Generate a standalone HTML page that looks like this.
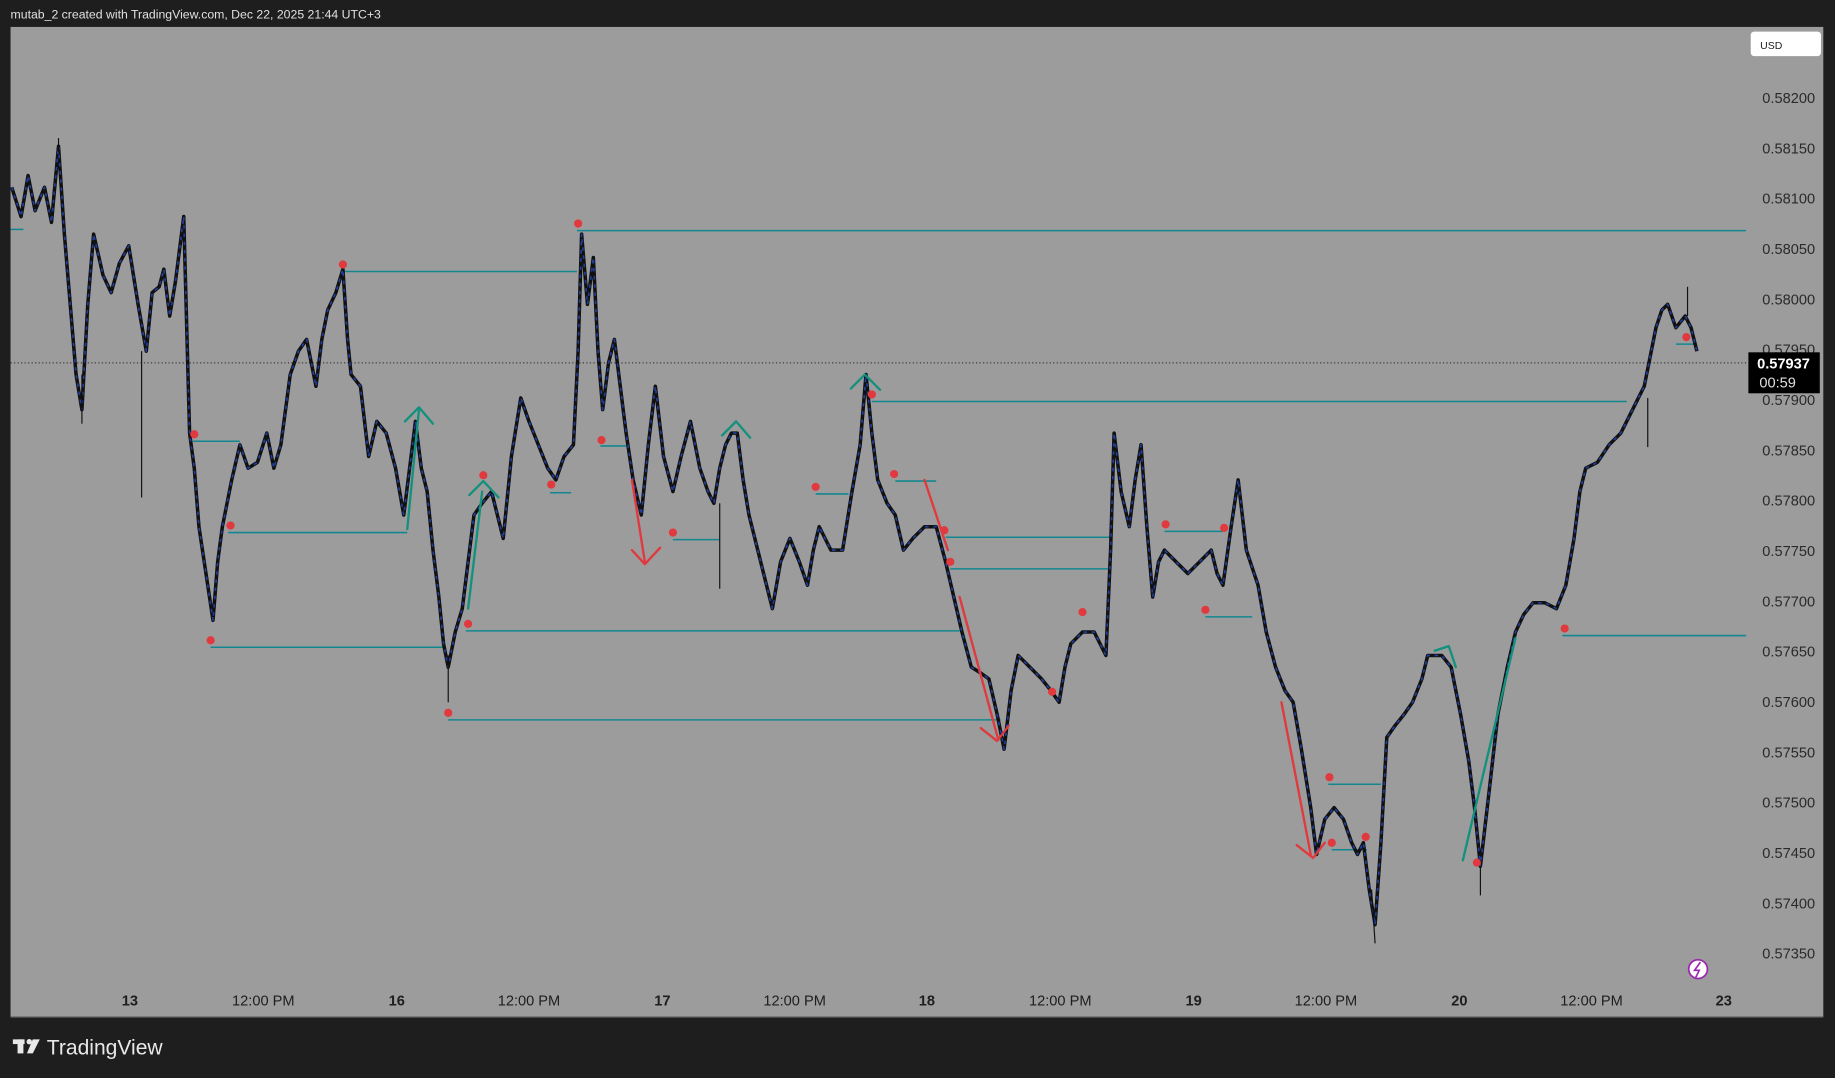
<!DOCTYPE html>
<html><head><meta charset="utf-8"><style>
html,body{margin:0;padding:0;background:#1e1e1e;overflow:hidden}
svg{display:block}
text{font-family:"Liberation Sans",sans-serif}
</style></head><body>
<svg width="1835" height="1078" viewBox="0 0 1568 921" preserveAspectRatio="none" xmlns="http://www.w3.org/2000/svg">
<rect width="1568" height="921" fill="#1e1e1e"/>
<text x="9" y="16" font-size="10.5" fill="#e0e0e0">mutab_2 created with TradingView.com, Dec 22, 2025 21:44 UTC+3</text>
<rect x="9" y="23" width="1549" height="846" fill="#9c9c9c"/>
<line x1="9" y1="869" x2="1558" y2="869" stroke="#555" stroke-width="1"/>
<rect x="1496" y="27" width="60" height="21" rx="3" fill="#fff"/>
<text x="1504" y="42" font-size="9" fill="#222">USD</text>
<g font-size="12.5" fill="#2a2a2a" text-anchor="end">
<text x="1551" y="88">0.58200</text>
<text x="1551" y="131">0.58150</text>
<text x="1551" y="174">0.58100</text>
<text x="1551" y="217">0.58050</text>
<text x="1551" y="260">0.58000</text>
<text x="1551" y="303">0.57950</text>
<text x="1551" y="346">0.57900</text>
<text x="1551" y="389">0.57850</text>
<text x="1551" y="432">0.57800</text>
<text x="1551" y="475">0.57750</text>
<text x="1551" y="518">0.57700</text>
<text x="1551" y="561">0.57650</text>
<text x="1551" y="604">0.57600</text>
<text x="1551" y="647">0.57550</text>
<text x="1551" y="690">0.57500</text>
<text x="1551" y="733">0.57450</text>
<text x="1551" y="776">0.57400</text>
<text x="1551" y="819">0.57350</text>
</g>
<g font-size="12.5" fill="#1e1e1e" text-anchor="middle">
<text x="111" y="859" font-weight="bold">13</text>
<text x="225" y="859">12:00 PM</text>
<text x="339" y="859" font-weight="bold">16</text>
<text x="452" y="859">12:00 PM</text>
<text x="566" y="859" font-weight="bold">17</text>
<text x="679" y="859">12:00 PM</text>
<text x="792" y="859" font-weight="bold">18</text>
<text x="906" y="859">12:00 PM</text>
<text x="1020" y="859" font-weight="bold">19</text>
<text x="1133" y="859">12:00 PM</text>
<text x="1247" y="859" font-weight="bold">20</text>
<text x="1360" y="859">12:00 PM</text>
<text x="1473" y="859" font-weight="bold">23</text>
</g>
<g stroke="#12878f" stroke-width="1.3">
<line x1="9" y1="196" x2="20" y2="196"/>
<line x1="493" y1="197" x2="1492" y2="197"/>
<line x1="293" y1="232" x2="493" y2="232"/>
<line x1="745" y1="343" x2="1390" y2="343"/>
<line x1="165" y1="377" x2="205" y2="377"/>
<line x1="195" y1="455" x2="348" y2="455"/>
<line x1="180" y1="553" x2="380" y2="553"/>
<line x1="398" y1="539" x2="820" y2="539"/>
<line x1="383" y1="615" x2="855" y2="615"/>
<line x1="808" y1="459" x2="948" y2="459"/>
<line x1="812" y1="486" x2="948" y2="486"/>
<line x1="1335" y1="543" x2="1492" y2="543"/>
<line x1="1135" y1="670" x2="1180" y2="670"/>
<line x1="995" y1="454" x2="1045" y2="454"/>
<line x1="1030" y1="527" x2="1070" y2="527"/>
<line x1="697" y1="422" x2="725" y2="422"/>
<line x1="765" y1="411" x2="800" y2="411"/>
<line x1="575" y1="461" x2="615" y2="461"/>
<line x1="513" y1="381" x2="535" y2="381"/>
<line x1="470" y1="421" x2="488" y2="421"/>
<line x1="1138" y1="726" x2="1168" y2="726"/>
<line x1="1432" y1="294" x2="1450" y2="294"/>
</g>
<line x1="9" y1="310" x2="1494" y2="310" stroke="#222" stroke-width="0.8" stroke-dasharray="1,2"/>
<g fill="none" stroke-linejoin="round">
<polyline stroke="#111" stroke-width="3" points="10,160 18,185 24,150 30,180 38,160 44,190 50,125 55,200 60,260 65,320 70,350 75,260 80,200 88,235 95,250 102,225 110,210 118,260 125,300 130,250 136,245 140,230 145,270 150,240 157,185 162,370 166,400 170,450 176,490 182,530 186,480 190,450 198,410 205,380 212,400 220,395 228,370 234,400 240,380 248,320 255,300 262,290 270,330 275,290 280,265 287,250 293,230 297,290 300,320 308,330 315,390 322,360 330,370 338,400 345,440 350,400 355,360 360,400 365,420 370,470 375,510 379,550 383,570 389,540 395,520 400,480 405,440 412,430 420,420 425,440 430,460 437,390 445,340 452,360 460,380 468,400 475,410 482,390 490,380 494,300 497,200 502,260 507,220 511,300 515,350 520,310 525,290 530,330 535,370 541,410 548,440 554,380 560,330 567,390 575,420 582,390 590,360 598,400 605,420 610,430 615,400 620,380 625,370 630,370 635,410 640,440 650,480 660,520 667,480 675,460 683,480 690,500 695,470 700,450 710,470 720,470 728,420 735,380 740,320 745,370 750,410 758,430 765,440 772,470 780,460 790,450 800,450 808,480 815,510 822,540 830,570 838,575 845,580 852,610 858,640 864,590 870,560 880,570 890,580 898,590 905,600 910,570 915,550 925,540 935,540 940,550 945,560 949,470 952,370 958,420 965,450 970,410 975,380 980,450 985,510 990,480 995,470 1005,480 1015,490 1025,480 1035,470 1040,490 1045,500 1052,450 1058,410 1065,470 1075,500 1082,540 1090,570 1098,590 1105,600 1112,640 1120,690 1125,730 1132,700 1140,690 1148,700 1155,720 1160,730 1165,720 1170,760 1175,790 1180,720 1185,630 1192,620 1200,610 1207,600 1215,580 1220,560 1225,560 1232,560 1240,570 1248,610 1255,650 1260,690 1265,740 1272,680 1280,610 1288,570 1295,540 1302,525 1310,515 1320,515 1330,520 1338,500 1345,460 1350,420 1355,400 1365,395 1375,380 1385,370 1395,350 1400,340 1405,330 1410,305 1415,280 1420,265 1425,260 1432,280 1440,270 1445,280 1450,300"/>
<polyline stroke="#1f3fa0" stroke-width="1.4" stroke-dasharray="3,4" points="10,160 18,185 24,150 30,180 38,160 44,190 50,125 55,200 60,260 65,320 70,350 75,260 80,200 88,235 95,250 102,225 110,210 118,260 125,300 130,250 136,245 140,230 145,270 150,240 157,185 162,370 166,400 170,450 176,490 182,530 186,480 190,450 198,410 205,380 212,400 220,395 228,370 234,400 240,380 248,320 255,300 262,290 270,330 275,290 280,265 287,250 293,230 297,290 300,320 308,330 315,390 322,360 330,370 338,400 345,440 350,400 355,360 360,400 365,420 370,470 375,510 379,550 383,570 389,540 395,520 400,480 405,440 412,430 420,420 425,440 430,460 437,390 445,340 452,360 460,380 468,400 475,410 482,390 490,380 494,300 497,200 502,260 507,220 511,300 515,350 520,310 525,290 530,330 535,370 541,410 548,440 554,380 560,330 567,390 575,420 582,390 590,360 598,400 605,420 610,430 615,400 620,380 625,370 630,370 635,410 640,440 650,480 660,520 667,480 675,460 683,480 690,500 695,470 700,450 710,470 720,470 728,420 735,380 740,320 745,370 750,410 758,430 765,440 772,470 780,460 790,450 800,450 808,480 815,510 822,540 830,570 838,575 845,580 852,610 858,640 864,590 870,560 880,570 890,580 898,590 905,600 910,570 915,550 925,540 935,540 940,550 945,560 949,470 952,370 958,420 965,450 970,410 975,380 980,450 985,510 990,480 995,470 1005,480 1015,490 1025,480 1035,470 1040,490 1045,500 1052,450 1058,410 1065,470 1075,500 1082,540 1090,570 1098,590 1105,600 1112,640 1120,690 1125,730 1132,700 1140,690 1148,700 1155,720 1160,730 1165,720 1170,760 1175,790 1180,720 1185,630 1192,620 1200,610 1207,600 1215,580 1220,560 1225,560 1232,560 1240,570 1248,610 1255,650 1260,690 1265,740 1272,680 1280,610 1288,570 1295,540 1302,525 1310,515 1320,515 1330,520 1338,500 1345,460 1350,420 1355,400 1365,395 1375,380 1385,370 1395,350 1400,340 1405,330 1410,305 1415,280 1420,265 1425,260 1432,280 1440,270 1445,280 1450,300"/>
</g>
<g stroke="#111" stroke-width="1">
<line x1="121" y1="300" x2="121" y2="425"/><line x1="70" y1="320" x2="70" y2="362"/><line x1="383" y1="560" x2="383" y2="600"/>
<line x1="615" y1="430" x2="615" y2="503"/><line x1="1172" y1="760" x2="1175" y2="806"/><line x1="1265" y1="740" x2="1265" y2="765"/>
<line x1="1442" y1="245" x2="1442" y2="270"/><line x1="1408" y1="340" x2="1408" y2="382"/><line x1="50" y1="118" x2="50" y2="130"/>
</g>
<g fill="none" stroke-width="2" stroke-linecap="round" stroke-linejoin="round">
<g stroke="#14917d">
<polyline points="348,452 358,350"/><polyline points="346,360 358,348 370,362"/>
<polyline points="400,520 412,420"/><polyline points="401,423 413,411 426,425"/>
<polyline points="617,372 629,360 641,374"/>
<polyline points="727,332 739,320 752,333"/>
<polyline points="1250,735 1295,545"/>
<polyline points="1226,556 1238,552 1244,570"/>
</g>
<g stroke="#e0393e">
<polyline points="540,410 551,480"/><polyline points="540,470 551,482 564,468"/>
<polyline points="790,410 810,470"/>
<polyline points="820,510 853,632"/><polyline points="838,622 852,633 862,620"/>
<polyline points="1095,600 1120,730"/><polyline points="1108,722 1122,733 1132,720"/>
</g>
</g>
<g fill="#e0393e">
<circle cx="166" cy="371" r="3.5"/><circle cx="197" cy="449" r="3.5"/><circle cx="180" cy="547" r="3.5"/><circle cx="293" cy="226" r="3.5"/>
<circle cx="383" cy="609" r="3.5"/><circle cx="400" cy="533" r="3.5"/><circle cx="413" cy="406" r="3.5"/><circle cx="471" cy="414" r="3.5"/>
<circle cx="494" cy="191" r="3.5"/><circle cx="514" cy="376" r="3.5"/><circle cx="575" cy="455" r="3.5"/><circle cx="697" cy="416" r="3.5"/>
<circle cx="745" cy="337" r="3.5"/><circle cx="764" cy="405" r="3.5"/><circle cx="807" cy="453" r="3.5"/><circle cx="812" cy="480" r="3.5"/>
<circle cx="899" cy="591" r="3.5"/><circle cx="925" cy="523" r="3.5"/><circle cx="996" cy="448" r="3.5"/><circle cx="1046" cy="451" r="3.5"/>
<circle cx="1030" cy="521" r="3.5"/><circle cx="1136" cy="664" r="3.5"/><circle cx="1138" cy="720" r="3.5"/><circle cx="1167" cy="715" r="3.5"/>
<circle cx="1262" cy="737" r="3.5"/><circle cx="1337" cy="537" r="3.5"/><circle cx="1441" cy="288" r="3.5"/>
</g>
<rect x="1494" y="301" width="61" height="35" fill="#000"/>
<text x="1524" y="315" font-size="12.5" font-weight="bold" fill="#fff" text-anchor="middle">0.57937</text>
<text x="1519" y="331" font-size="12.5" fill="#e0e0e0" text-anchor="middle">00:59</text>
<circle cx="1451" cy="828" r="8" fill="#fff" stroke="#9c27b0" stroke-width="1.5"/>
<path d="M1453 822 L1448 829 L1452 829 L1449 835" stroke="#9c27b0" stroke-width="1.4" fill="none"/>
<g fill="#e8e8e8">
<rect x="11" y="888" width="10" height="4"/><rect x="15" y="888" width="5" height="12"/>
<circle cx="25" cy="890" r="2.3"/><path d="M28 888 L34 888 L28 900 L23 900 Z"/>
</g>
<text x="40" y="901" font-size="18" fill="#e8e8e8">TradingView</text>
</svg>
</body></html>
